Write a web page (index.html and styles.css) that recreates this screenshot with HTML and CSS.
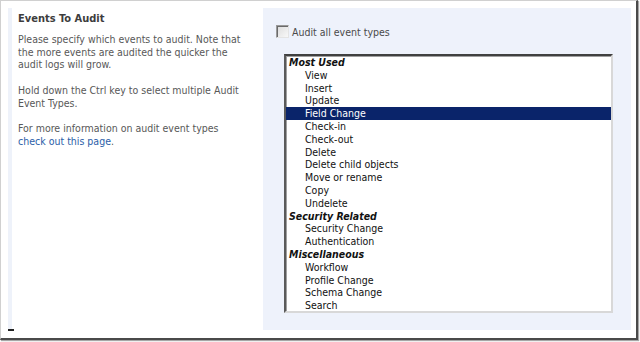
FILE: index.html
```html
<!DOCTYPE html>
<html>
<head>
<meta charset="utf-8">
<link rel="stylesheet" href="styles.css">
</head>
<body>
<div class="frame">
  <div class="left">
    <h3 class="title">Events To Audit</h3>
    <p class="desc">Please specify which events to audit. Note that the more events are audited the quicker the audit logs will grow.</p>
    <p class="desc">Hold down the Ctrl key to select multiple Audit Event Types.</p>
    <p class="desc">For more information on audit event types <a class="link" href="#">check out this page</a>.</p>
    <div class="mark"></div>
  </div>
  <div class="right">
    <label class="check"><span class="box"></span><span class="check-text">Audit all event types</span></label>
    <div class="listbox">
      <div class="group">Most Used</div>
      <div class="item">View</div>
      <div class="item">Insert</div>
      <div class="item">Update</div>
      <div class="item selected">Field Change</div>
      <div class="item">Check-in</div>
      <div class="item">Check-out</div>
      <div class="item">Delete</div>
      <div class="item">Delete child objects</div>
      <div class="item">Move or rename</div>
      <div class="item">Copy</div>
      <div class="item">Undelete</div>
      <div class="group">Security Related</div>
      <div class="item">Security Change</div>
      <div class="item">Authentication</div>
      <div class="group">Miscellaneous</div>
      <div class="item">Workflow</div>
      <div class="item">Profile Change</div>
      <div class="item">Schema Change</div>
      <div class="item">Search</div>
    </div>
  </div>
</div>
</body>
</html>
```

FILE: styles.css
```css
html, body {
  margin: 0;
  padding: 0;
  background: #ffffff;
}
body {
  width: 640px;
  height: 342px;
  overflow: hidden;
  font-family: "DejaVu Sans Condensed", "DejaVu Sans", sans-serif;
  font-size: 10.5px;
}
.frame {
  box-sizing: border-box;
  width: 638px;
  height: 340px;
  border-top: 1px solid #d0d0d0;
  border-left: 1px solid #d0d0d0;
  border-right: 2px solid #4a4a4a;
  border-bottom: 2px solid #4a4a4a;
  box-shadow: 1px 1px 1px rgba(0,0,0,0.35);
  background: #fff;
  padding: 7px 0 8px 7px;
  display: flex;
}
.left {
  box-sizing: border-box;
  width: 255px;
  border-left: 4px solid #eef2fa;
  padding: 4px 0 0 6px;
  display: flex;
  flex-direction: column;
}
.title {
  margin: 0 0 8px 0;
  font-size: 11px;
  font-weight: bold;
  color: #3d3d3d;
  line-height: 13px;
}
.desc {
  margin: 0 0 12.7px 0;
  color: #585858;
  line-height: 12.7px;
  width: 230px;
}
.link {
  color: #2b5ea8;
  text-decoration: none;
}
.mark {
  margin-top: auto;
  margin-left: -10px;
  width: 6px;
  height: 2px;
  background: #222;
  margin-bottom: -1px;
}
.right {
  width: 368px;
  background: #eef2fb;
  padding: 17px 0 0 13px;
  box-sizing: border-box;
  height: 322px;
}
.check {
  display: flex;
  align-items: center;
  height: 13px;
}
.box {
  box-sizing: border-box;
  width: 13px;
  height: 13px;
  border: 1px solid #9a9a9a;
  border-right-color: #e4e4e4;
  border-bottom-color: #e4e4e4;
  background: linear-gradient(135deg, #dcdcdc, #f8f8f8);
  box-shadow: inset 1px 1px 0 #6a6a6a;
}
.check-text {
  margin-left: 3px;
  color: #4a4a4a;
}
.listbox {
  box-sizing: border-box;
  margin: 16px 0 0 8px;
  width: 329px;
  height: 259px;
  background: #fff;
  border-top: 2px solid #404040;
  border-left: 2px solid #5a5a5a;
  border-right: 2px solid #d8d8d8;
  border-bottom: 2px solid #d8d8d8;
  box-shadow: inset 1px 1px 0 #a0a0a0;
  line-height: 12.8px;
  color: #111;
  overflow: hidden;
}
.group {
  font-weight: bold;
  font-style: italic;
  padding-left: 3px;
}
.item {
  padding-left: 19px;
}
.item.selected {
  background: #0a246a;
  color: #fff;
}
```
